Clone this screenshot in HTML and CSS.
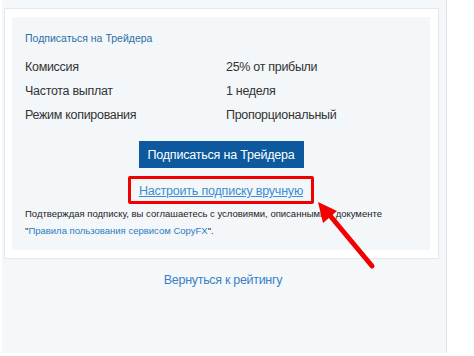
FILE: index.html
```html
<!DOCTYPE html>
<html lang="ru">
<head>
<meta charset="utf-8">
<link rel="stylesheet" href="styles.css">
</head>
<body>
<div class="outer">
  <div class="card">
    <div class="panel">
      <div class="title">Подписаться на Трейдера</div>
      <div class="rows">
        <div class="label">Комиссия</div><div class="value">25% от прибыли</div>
        <div class="label">Частота выплат</div><div class="value">1 неделя</div>
        <div class="label">Режим копирования</div><div class="value">Пропорциональный</div>
      </div>
      <div class="center">
        <button class="btn">Подписаться на Трейдера</button>
      </div>
      <div class="center">
        <div class="redbox"><a class="manual" href="#">Настроить подписку вручную</a></div>
      </div>
      <div class="terms">Подтверждая подписку, вы соглашаетесь с условиями, описанными в документе<br>"<a class="tlink" href="#">Правила пользования сервисом CopyFX</a>".</div>
    </div>
  </div>
  <div class="back"><a href="#">Вернуться к рейтингу</a></div>
</div>
<svg class="arrow" width="474" height="356" viewBox="0 0 474 356">
  <line x1="372" y1="266" x2="327" y2="212" stroke="#f20000" stroke-width="5" stroke-linecap="round"/>
  <polygon points="318,202 323,223 337,211" fill="#f20000"/>
</svg>
</body>
</html>
```
FILE: styles.css
```css
html, body {
  margin: 0;
  padding: 0;
  background: #ffffff;
  font-family: "Liberation Sans", Arial, sans-serif;
}
.outer {
  margin-left: 2px;
  width: 445px;
  height: 353px;
  box-sizing: border-box;
  background: #f5f8fb;
  border-right: 1px solid #dde1e5;
  padding-top: 8px;
  padding-left: 2px;
}
.card {
  width: 435px;
  box-sizing: border-box;
  background: #ffffff;
  border: 1px solid #e4e8ec;
  padding: 8px 8px 8px 7px;
}
.panel {
  height: 233px;
  box-sizing: border-box;
  background: #f3f7fa;
  padding: 14px 13px 0 13px;
}
.title {
  font-size: 10.5px;
  line-height: 14px;
  color: #2f6ea5;
}
.rows {
  margin-top: 10px;
  display: grid;
  grid-template-columns: 201px 1fr;
  font-size: 12.5px;
  letter-spacing: -0.3px;
  line-height: 24px;
  color: #333333;
}
.center {
  display: flex;
  justify-content: center;
}
.btn {
  margin-top: 14px;
  width: 165px;
  height: 27px;
  border: none;
  background: #0c5a9d;
  color: #ffffff;
  font-family: "Liberation Sans", Arial, sans-serif;
  font-size: 12.5px;
  letter-spacing: -0.2px;
  padding: 0;
}
.redbox {
  margin-top: 8px;
  width: 186px;
  flex: 0 0 186px;
  height: 28px;
  box-sizing: border-box;
  border: 3px solid #f20000;
  border-radius: 2px;
  text-align: center;
  line-height: 22px;
}
.manual {
  color: #3b8dd3;
  font-size: 12.5px;
  letter-spacing: -0.2px;
  text-decoration: underline;
}
.terms {
  margin-top: 1px;
  font-size: 9.5px;
  line-height: 17px;
  color: #222222;
}
.tlink {
  color: #2a7cc4;
  text-decoration: none;
}
.back {
  margin-top: 12px;
  text-align: center;
  font-size: 12.5px;
  letter-spacing: -0.3px;
  line-height: 18px;
  padding-right: 4px;
}
.back a {
  color: #3a80c4;
  text-decoration: none;
}
.arrow {
  position: absolute;
  left: 0;
  top: 0;
  pointer-events: none;
}
```
